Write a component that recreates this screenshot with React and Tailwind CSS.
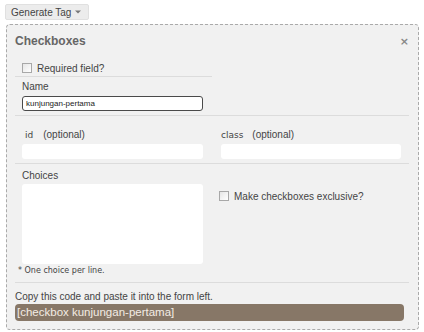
import React from "react";

const sans = { fontFamily: '"Liberation Sans", Arial, sans-serif' };
const deja = { fontFamily: '"DejaVu Sans", Verdana, sans-serif' };

function Box() {
  return (
    <span className="w-[10px] h-[10px] border border-[#a8a8a8] bg-gradient-to-br from-[#e6e6e6] to-white mr-[5px] shrink-0"></span>
  );
}

export default function App() {
  return (
    <div className="w-[424px] h-[332px] bg-white overflow-hidden text-[10px] text-[#444]" style={sans}>
      <div className="pt-[4px] pl-[5px]">
        <div className="inline-flex items-center h-[16px] pl-[5px] pr-[7px] bg-[#ececec] border border-[#e0e0e0] rounded-[2px] text-[10px] text-[#444]">
          <span>Generate Tag</span>
          <svg className="ml-[4px]" width="6" height="4" viewBox="0 0 6 4"><path d="M0 0.5h6L3 3.5z" fill="#777" /></svg>
        </div>
      </div>
      <div className="mt-[4px] ml-[6px] w-[413px] h-[306px] border border-dashed border-[#aaa] rounded-[4px] bg-[#f1f1f1] pl-[8px]">
        <div className="flex items-center justify-between h-[30px] pt-[1px] w-[394px]">
          <span className="text-[12px] font-bold text-[#666]">Checkboxes</span>
          <span className="text-[11px] font-bold text-[#888] mt-[3px]" style={deja}>×</span>
        </div>
        <div className="w-[197px] pl-[7px] h-[22px] pt-[5px] flex items-center border-b border-[#dcdcdc]">
          <Box />
          <span>Required field?</span>
        </div>
        <div className="border-b border-[#dcdcdc] pl-[7px] pt-[3px] pb-[4px] w-[394px]">
          <div className="leading-[14px]">Name</div>
          <div className="w-[181px] h-[15px] border border-[#4a4a4a] rounded-[3px] bg-white mt-[2px] text-[8px] leading-[13px] pl-[3px] text-[#222]">kunjungan-pertama</div>
        </div>
        <div className="flex border-b border-[#dcdcdc] w-[394px] pt-[12px] pb-[4px]">
          <div className="w-[197px] pl-[7px]">
            <div className="leading-[14px] pl-[3px]"><span className="text-[9px]" style={deja}>id</span><span className="ml-[10px]">(optional)</span></div>
            <div className="w-[181px] h-[15px] rounded-[3px] bg-white mt-[2px]"></div>
          </div>
          <div className="w-[197px] pl-[9px]">
            <div className="leading-[14px]"><span className="text-[9px]" style={deja}>class</span><span className="ml-[9px]">(optional)</span></div>
            <div className="w-[180px] h-[15px] rounded-[3px] bg-white mt-[2px]"></div>
          </div>
        </div>
        <div className="flex border-b border-[#dcdcdc] w-[394px] pt-[5px] pb-[5px]">
          <div className="w-[197px] pl-[7px]">
            <div className="leading-[14px]">Choices</div>
            <div className="w-[181px] h-[80px] rounded-[3px] bg-white mt-[1px]"></div>
            <div className="text-[8px] leading-[12px] mt-[1px] -ml-[4px]" style={deja}>* One choice per line.</div>
          </div>
          <div className="w-[197px] pl-[7px] pt-[20px]">
            <div className="flex items-center h-[14px]">
              <Box />
              <span>Make checkboxes exclusive?</span>
            </div>
          </div>
        </div>
        <div className="leading-[13px] mt-[7px]">Copy this code and paste it into the form left.</div>
        <div className="w-[389px] h-[17px] rounded-[4px] bg-[#877767] text-[11.5px] leading-[17px] text-[#f3ece4] pl-[2px] mt-[1px]">[checkbox kunjungan-pertama]</div>
      </div>
    </div>
  );
}
